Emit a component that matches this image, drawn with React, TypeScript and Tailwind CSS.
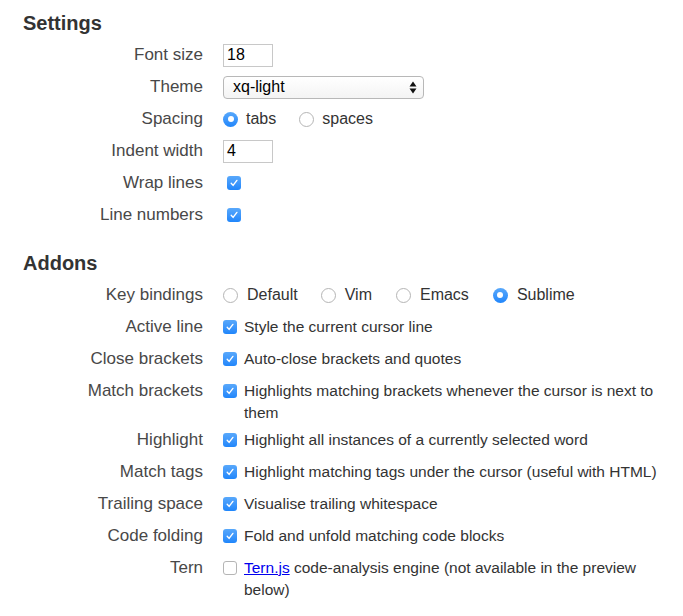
import React from "react";

function Check({ checked = true, className = "" }: { checked?: boolean; className?: string }) {
  return checked ? (
    <span className={`inline-flex h-[14px] w-[14px] shrink-0 items-center justify-center rounded-[3px] bg-gradient-to-b from-[#58a8fb] to-[#1f86fb] ${className}`}>
      <svg width="10" height="10" viewBox="0 0 10 10" fill="none">
        <path d="M2.2 5.3 L4.1 7.4 L7.9 2.4" stroke="white" strokeWidth="1.4" strokeLinecap="round" strokeLinejoin="round" />
      </svg>
    </span>
  ) : (
    <span className={`inline-block h-[14px] w-[14px] shrink-0 rounded-[3px] border border-[#b5b5b5] bg-white ${className}`} />
  );
}

function Radio({ checked = false, className = "" }: { checked?: boolean; className?: string }) {
  return checked ? (
    <span className={`flex h-[15px] w-[15px] shrink-0 items-center justify-center rounded-full bg-gradient-to-b from-[#58a8fb] to-[#1f86fb] ${className}`}>
      <span className="h-[6px] w-[6px] rounded-full bg-white" />
    </span>
  ) : (
    <span className={`block h-[15px] w-[15px] shrink-0 rounded-full border border-[#b5b5b5] bg-white ${className}`} />
  );
}

function Row({ label, children, tall = false }: { label: string; children: React.ReactNode; tall?: boolean }) {
  return (
    <div className={`grid grid-cols-[203px_1fr] gap-x-5 ${tall ? "items-start pt-[5px]" : "h-8 items-center"}`}>
      <div className="text-right text-[17px] leading-[22px] text-[#484848]">{label}</div>
      <div className="flex min-h-[22px] items-center">{children}</div>
    </div>
  );
}

function CheckText({ children, checked = true }: { children: React.ReactNode; checked?: boolean }) {
  return (
    <div className="flex items-start">
      <Check checked={checked} className="mt-[4px]" />
      <span className="ml-[7px] w-[418px] text-[15.5px] leading-[22px] text-[#333]">{children}</span>
    </div>
  );
}

export default function App() {
  return (
    <div className="min-h-[616px] w-[683px] bg-white pt-[11px] font-['Liberation_Sans',Arial,sans-serif]">
      <h2 className="mb-[4px] ml-[23px] text-[20px] font-bold leading-[24px] text-[#333]">Settings</h2>
      <Row label="Font size">
        <div className="flex h-[23px] w-[50px] items-center border border-[#c8c8c8] pl-[3px] text-[16px] text-black">18</div>
      </Row>
      <Row label="Theme">
        <div className="relative flex h-[23px] w-[201px] items-center rounded-[4px] border border-[#b8b8b8] bg-gradient-to-b from-white to-[#f4f4f4] pl-[9px] text-[16px] text-black">
          xq-light
          <svg className="absolute right-[6px] top-[4px]" width="8" height="13" viewBox="0 0 8 13">
            <path d="M4 0.5 L7.5 5.5 L0.5 5.5 Z" fill="#111" />
            <path d="M4 12.5 L7.5 7.5 L0.5 7.5 Z" fill="#111" />
          </svg>
        </div>
      </Row>
      <Row label="Spacing">
        <div className="flex items-center text-[16px] text-[#333]">
          <Radio checked />
          <span className="ml-[8px]">tabs</span>
          <Radio className="ml-[23px]" />
          <span className="ml-[8px]">spaces</span>
        </div>
      </Row>
      <Row label="Indent width">
        <div className="flex h-[23px] w-[50px] items-center border border-[#c8c8c8] pl-[3px] text-[16px] text-black">4</div>
      </Row>
      <Row label="Wrap lines">
        <Check className="ml-[4px]" />
      </Row>
      <Row label="Line numbers">
        <Check className="ml-[4px]" />
      </Row>

      <h2 className="mb-[4px] ml-[23px] mt-[20px] text-[20px] font-bold leading-[24px] text-[#333]">Addons</h2>
      <Row label="Key bindings">
        <div className="flex items-center text-[16px] text-[#333]">
          <Radio />
          <span className="ml-[9px]">Default</span>
          <Radio className="ml-[23px]" />
          <span className="ml-[9px]">Vim</span>
          <Radio className="ml-[24px]" />
          <span className="ml-[9px]">Emacs</span>
          <Radio checked className="ml-[24px]" />
          <span className="ml-[9px]">Sublime</span>
        </div>
      </Row>
      <Row label="Active line"><CheckText>Style the current cursor line</CheckText></Row>
      <Row label="Close brackets"><CheckText>Auto-close brackets and quotes</CheckText></Row>
      <Row label="Match brackets" tall><CheckText>Highlights matching brackets whenever the cursor is next to them</CheckText></Row>
      <Row label="Highlight"><CheckText>Highlight all instances of a currently selected word</CheckText></Row>
      <Row label="Match tags"><CheckText>Highlight matching tags under the cursor (useful with HTML)</CheckText></Row>
      <Row label="Trailing space"><CheckText>Visualise trailing whitespace</CheckText></Row>
      <Row label="Code folding"><CheckText>Fold and unfold matching code blocks</CheckText></Row>
      <Row label="Tern" tall>
        <CheckText checked={false}>
          <a className="text-[#0000ee] underline">Tern.js</a> code-analysis engine (not available in the preview below)
        </CheckText>
      </Row>
    </div>
  );
}
